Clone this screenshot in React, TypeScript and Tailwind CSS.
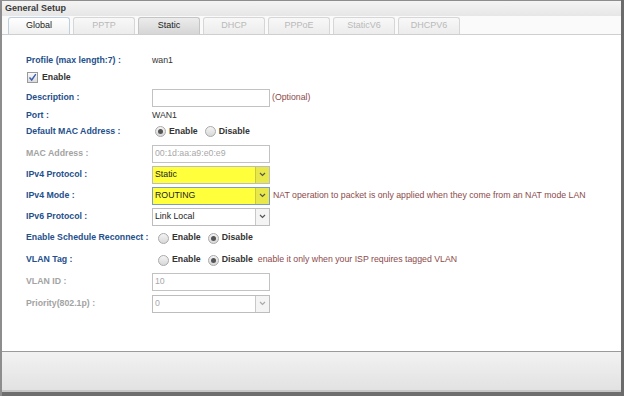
import React from "react";

const font = { fontFamily: '"Liberation Sans", Arial, sans-serif' };

function Label({ children, gray }: { children: React.ReactNode; gray?: boolean }) {
  return (
    <div
      className={`w-[126px] shrink-0 whitespace-nowrap font-bold text-[8.75px] ${gray ? "text-[#a3a3a3]" : "text-[#24508c]"}`}
    >
      {children}
    </div>
  );
}

function Radio({ checked }: { checked?: boolean }) {
  return (
    <span className="inline-flex h-[11px] w-[11px] items-center justify-center rounded-full border border-[#a9a9a9] bg-gradient-to-b from-[#f4f4f4] to-[#d8d8d8]">
      {checked && <span className="h-[5px] w-[5px] rounded-full bg-[#555]" />}
    </span>
  );
}

function RadioPair({ first, wide }: { first: boolean; wide?: boolean }) {
  return (
    <div className={`flex items-center text-[8.75px] font-bold text-[#333] ${wide ? "ml-[6px]" : "ml-[3px]"}`}>
      <Radio checked={first} />
      <span className="ml-[3px]">Enable</span>
      <span className="ml-[7px]" />
      <Radio checked={!first} />
      <span className="ml-[3px]">Disable</span>
    </div>
  );
}

function Select({
  value,
  yellow,
  focus,
  disabled,
}: {
  value: string;
  yellow?: boolean;
  focus?: boolean;
  disabled?: boolean;
}) {
  return (
    <div
      className={`flex h-[18px] w-[118px] border ${
        focus ? "border-[#7a9ccc]" : "border-[#bdbdbd]"
      } ${yellow ? "bg-[#ffff3c]" : "bg-white"}`}
    >
      <div
        className={`flex flex-1 items-center pl-[2px] text-[8.75px] ${
          disabled ? "text-[#aaa]" : "text-[#222]"
        }`}
      >
        {value}
      </div>
      <div
        className={`flex w-[14px] items-center justify-center border-l ${
          yellow ? "border-[#c9c940] bg-[#e8e84a]" : "border-[#c8c8c8] bg-[#f4f4f4]"
        }`}
      >
        <svg width="7" height="5" viewBox="0 0 7 5">
          <path
            d="M1 1 L3.5 3.5 L6 1"
            fill="none"
            stroke={disabled ? "#aaa" : "#555"}
            strokeWidth="1.2"
          />
        </svg>
      </div>
    </div>
  );
}

function Input({ value, gray }: { value?: string; gray?: boolean }) {
  return (
    <div
      className={`flex h-[18px] w-[118px] items-center border border-[#c2c2c2] bg-white pl-[2px] text-[8.75px] ${
        gray ? "text-[#a8a8a8]" : "text-[#222]"
      }`}
    >
      {value}
    </div>
  );
}

const tabs = [
  { name: "Global", kind: "active" },
  { name: "PPTP", kind: "off" },
  { name: "Static", kind: "sel" },
  { name: "DHCP", kind: "off" },
  { name: "PPPoE", kind: "off" },
  { name: "StaticV6", kind: "off" },
  { name: "DHCPV6", kind: "off" },
];

export default function App() {
  return (
    <div className="flex h-[396px] w-[624px] bg-[#6b6b6b]" style={font}>
      <div className="flex flex-1 flex-col border-l-2 border-t border-[#8d8d8d] bg-white">
        {/* title */}
        <div className="flex h-[15px] items-center bg-gradient-to-b from-[#f4f4f4] to-[#e6e6e6] pl-[3px] text-[9px] font-bold text-[#3a3a3a]">
          General Setup
        </div>
        {/* tabs */}
        <div className="flex h-[19px] items-end gap-[3px] border-b border-[#cfcfcf] bg-[#fafafa] pl-[6px]">
          {tabs.map((t) => (
            <div
              key={t.name}
              className={`flex h-[17px] w-[62px] items-center justify-center rounded-t-[3px] border border-b-0 text-[9px] ${
                t.kind === "active"
                  ? "border-[#bfcfe0] bg-gradient-to-b from-[#ffffff] to-[#f0f0f0] text-[#222]"
                  : t.kind === "sel"
                  ? "border-[#c4c4c4] bg-gradient-to-b from-[#ececec] to-[#d6d6d6] text-[#222]"
                  : "border-[#d6d6d6] bg-gradient-to-b from-[#f8f8f8] to-[#ececec] text-[#b9b9b9]"
              }`}
            >
              {t.name}
            </div>
          ))}
        </div>
        {/* content */}
        <div className="flex flex-1 flex-col pl-[24px] pt-[18px]">
          <div className="flex h-[16px] items-center">
            <Label>Profile (max length:7) :</Label>
            <span className="text-[8.75px] text-[#333]">wan1</span>
          </div>
          <div className="mt-[1px] flex h-[15px] items-center pl-[1px]">
            <span className="flex h-[11px] w-[11px] items-center justify-center border border-[#9a9a9a] bg-gradient-to-b from-[#fafafa] to-[#dcdcdc]">
              <svg width="9" height="9" viewBox="0 0 9 9">
                <path d="M1.5 4.5 L3.7 7 L7.8 1.2" fill="none" stroke="#3a5fb0" strokeWidth="1.4" />
              </svg>
            </span>
            <span className="ml-[4px] text-[8.75px] font-bold text-[#333]">Enable</span>
          </div>
          <div className="mt-[2px] flex h-[21px] items-center">
            <Label>Description :</Label>
            <Input />
            <span className="ml-[2px] text-[8.75px] text-[#8c4a4a]">(Optional)</span>
          </div>
          <div className="flex h-[15px] items-center">
            <Label>Port :</Label>
            <span className="text-[8.75px] text-[#333]">WAN1</span>
          </div>
          <div className="flex h-[17px] items-center">
            <Label>Default MAC Address :</Label>
            <RadioPair first={true} />
          </div>
          <div className="mt-[3px] flex h-[21px] items-center">
            <Label gray>MAC Address :</Label>
            <Input value="00:1d:aa:a9:e0:e9" gray />
          </div>
          <div className="flex h-[21px] items-center">
            <Label>IPv4 Protocol :</Label>
            <Select value="Static" yellow />
          </div>
          <div className="flex h-[21px] items-center">
            <Label>IPv4 Mode :</Label>
            <Select value="ROUTING" yellow focus />
            <span className="ml-[3px] text-[8.75px] text-[#8c4a4a]">
              NAT operation to packet is only applied when they come from an NAT mode LAN
            </span>
          </div>
          <div className="flex h-[21px] items-center">
            <Label>IPv6 Protocol :</Label>
            <Select value="Link Local" />
          </div>
          <div className="flex h-[22px] items-center">
            <Label>Enable Schedule Reconnect :</Label>
            <RadioPair first={false} wide />
          </div>
          <div className="flex h-[22px] items-center">
            <Label>VLAN Tag :</Label>
            <RadioPair first={false} wide />
            <span className="ml-[5px] text-[8.75px] text-[#8c4a4a]">
              enable it only when your ISP requires tagged VLAN
            </span>
          </div>
          <div className="flex h-[22px] items-center">
            <Label gray>VLAN ID :</Label>
            <Input value="10" gray />
          </div>
          <div className="flex h-[21px] items-center">
            <Label gray>Priority(802.1p) :</Label>
            <Select value="0" disabled />
          </div>
        </div>
        {/* footer */}
        <div className="h-[41px] border-t border-b-2 border-t-[#9a9a9a] border-b-[#c8c8c8] bg-gradient-to-b from-[#f2f2f2] to-[#e2e2e2]" />
        <div className="h-[4px] bg-[#6e6e6e]" />
      </div>
      <div className="w-[3px] bg-[#6b6b6b]" />
    </div>
  );
}
